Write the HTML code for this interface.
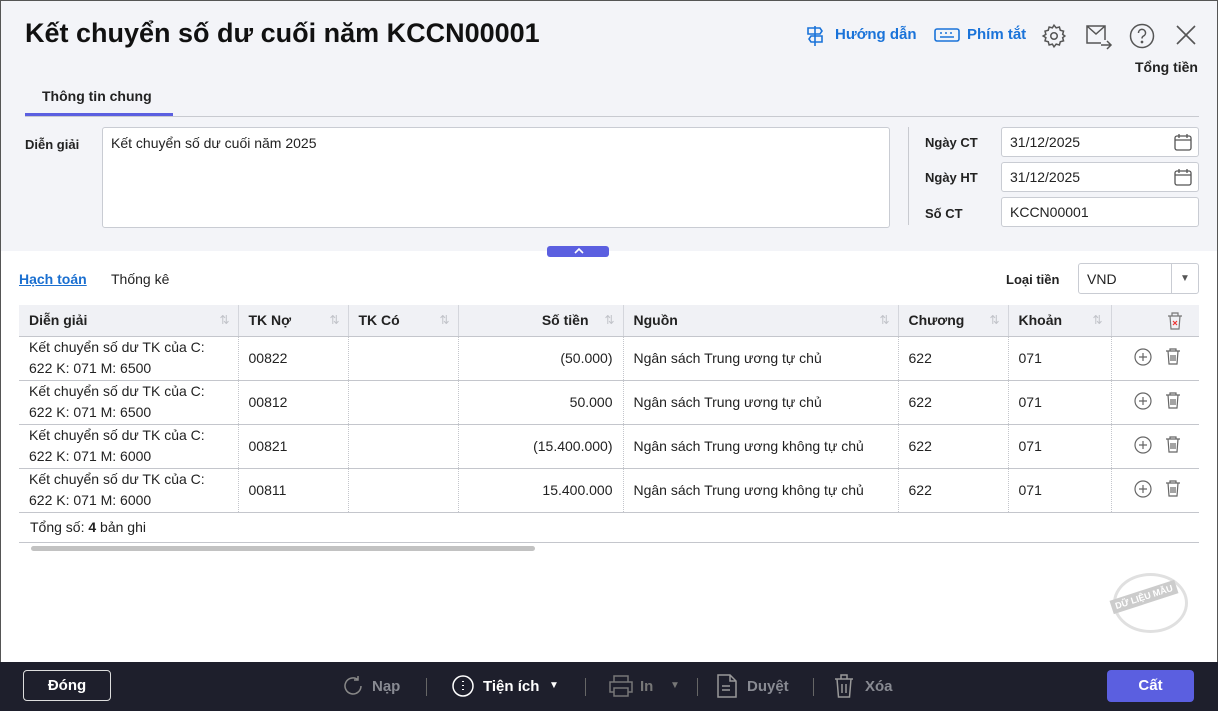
<!DOCTYPE html><html><head><meta charset="utf-8"><style>
*{box-sizing:border-box;margin:0;padding:0}
body{width:1218px;height:711px;overflow:hidden;font-family:"Liberation Sans",sans-serif;font-size:14px;color:#222;background:#fff;position:relative}
.abs{position:absolute}
.frame{position:absolute;left:0;top:0;width:1218px;height:711px;border:1px solid #555;border-bottom:none}
.top{position:absolute;left:1px;top:0;width:1216px;height:251px;background:#f3f4f8}
.box{position:absolute;background:#fff;border:1px solid #c9ccd3;border-radius:3px}
.lbl{position:absolute;font-weight:bold;font-size:13px}
table{position:absolute;left:19px;top:305px;width:1180px;border-collapse:collapse;table-layout:fixed}
th{height:31px;background:#f0f1f5;text-align:left;font-weight:bold;font-size:14px;padding:0 10px;border-right:1px solid #d4d6dc;border-bottom:1px solid #c4c6cc;position:relative}
th .s{position:absolute;right:8px;top:8px;color:#c2c4ca;font-size:12px;font-weight:normal}
td{height:44px;padding:0 10px;border-right:1px dotted #c4c6cc;border-bottom:1px solid #c4c6cc;line-height:21px;vertical-align:middle}
td:last-child,th:last-child{border-right:none}
.r{text-align:right}
.foot{position:absolute;left:0;top:662px;width:1218px;height:49px;background:#1e1f2c}
.fb{position:absolute;top:0;height:49px;line-height:49px;color:#888a92;font-weight:bold;font-size:15px}
</style></head><body>
<div class="top"></div>
<div class="frame"></div>
<div class="abs" style="left:25px;top:18px;font-size:27px;font-weight:bold;color:#111">Kết chuyển số dư cuối năm KCCN00001</div>
<svg class="abs" style="left:805px;top:25px" width="20" height="22" viewBox="0 0 20 22" fill="none" stroke="#1a73d9" stroke-width="1.6"><path d="M10 1v20M3 3h12l2 3-2 3H3zM17 11H6l-2 3 2 3h11z"/></svg>
<div class="abs" style="left:835px;top:26px;color:#1a73d9;font-weight:bold;font-size:15px">Hướng dẫn</div>
<svg class="abs" style="left:934px;top:28px" width="26" height="14" fill="none" stroke="#1a73d9" stroke-width="1.6"><rect x="1" y="1" width="24" height="12" rx="2"/><path d="M6 5h2M11 5h2M16 5h2M6 9h14" /></svg>
<div class="abs" style="left:967px;top:26px;color:#1a73d9;font-weight:bold;font-size:15px">Phím tắt</div>
<svg class="abs" style="left:1041px;top:23px" width="26" height="26" viewBox="0 0 24 24" fill="none" stroke="#555" stroke-width="1.4"><circle cx="12" cy="12" r="3"/><path d="M12 2l2 2.5 3-.8.8 3 3 .8-.8 3L22 12l-2 1.5.8 3-3 .8-.8 3-3-.8L12 22l-1.5-2.5-3 .8-.8-3-3-.8.8-3L2 12l2.5-1.5-.8-3 3-.8.8-3 3 .8z"/></svg>
<svg class="abs" style="left:1085px;top:24px" width="28" height="26" fill="none" stroke="#555" stroke-width="1.5"><path d="M20 16V2H2v17h14M2 2l9 8 9-8M16 21h10M22 17l4 4-4 4"/></svg>
<svg class="abs" style="left:1129px;top:23px" width="26" height="26" fill="none" stroke="#555" stroke-width="1.5"><circle cx="13" cy="13" r="11.5"/><path d="M9.5 10a3.5 3.5 0 1 1 5 3c-1.2.6-1.5 1.2-1.5 2.5"/><circle cx="13" cy="19" r=".6" fill="#555"/></svg>
<svg class="abs" style="left:1176px;top:25px" width="20" height="20" stroke="#555" stroke-width="1.6"><path d="M1 1l18 18M19 1L1 19"/></svg>
<div class="abs" style="left:1135px;top:59px;font-weight:bold;font-size:14px">Tổng tiền</div>
<div class="abs" style="left:42px;top:88px;font-weight:bold;font-size:14px">Thông tin chung</div>
<div class="abs" style="left:25px;top:113px;width:148px;height:3px;background:#5b5fe0"></div>
<div class="abs" style="left:25px;top:116px;width:1174px;height:1px;background:#c8cad0"></div>
<div class="lbl" style="left:25px;top:137px">Diễn giải</div>
<div class="box" style="left:102px;top:127px;width:788px;height:101px"></div>
<div class="abs" style="left:111px;top:135px">Kết chuyển số dư cuối năm 2025</div>
<div class="abs" style="left:908px;top:127px;width:1px;height:98px;background:#c8cad0"></div>
<div class="lbl" style="left:925px;top:135px">Ngày CT</div>
<div class="lbl" style="left:925px;top:170px">Ngày HT</div>
<div class="lbl" style="left:925px;top:206px">Số CT</div>
<div class="box" style="left:1001px;top:127px;width:198px;height:30px"></div>
<div class="box" style="left:1001px;top:162px;width:198px;height:30px"></div>
<div class="box" style="left:1001px;top:197px;width:198px;height:30px"></div>
<div class="abs" style="left:1010px;top:134px">31/12/2025</div>
<div class="abs" style="left:1010px;top:169px">31/12/2025</div>
<div class="abs" style="left:1010px;top:204px">KCCN00001</div>
<svg class="abs" style="left:1174px;top:133px" width="18" height="18" fill="none" stroke="#555" stroke-width="1.3"><rect x="1" y="3" width="16" height="14" rx="2"/><path d="M1 7h16M5 1v4M13 1v4"/></svg>
<svg class="abs" style="left:1174px;top:168px" width="18" height="18" fill="none" stroke="#555" stroke-width="1.3"><rect x="1" y="3" width="16" height="14" rx="2"/><path d="M1 7h16M5 1v4M13 1v4"/></svg>
<div class="abs" style="left:547px;top:246px;width:62px;height:11px;background:#5b5fe0;border-radius:3px"></div>
<svg class="abs" style="left:573px;top:247px" width="12" height="8" stroke="#fff" stroke-width="1.6" fill="none"><path d="M2 6l4-4 4 4"/></svg>
<div class="abs" style="left:19px;top:271px;color:#1a6fd0;text-decoration:underline;font-weight:bold;font-size:14px">Hạch toán</div>
<div class="abs" style="left:111px;top:271px">Thống kê</div>
<div class="lbl" style="left:1006px;top:272px">Loại tiền</div>
<div class="box" style="left:1078px;top:263px;width:121px;height:31px"></div>
<div class="abs" style="left:1087px;top:271px">VND</div>
<div class="abs" style="left:1171px;top:264px;width:1px;height:29px;background:#c9ccd3"></div>
<div class="abs" style="left:1180px;top:273px;font-size:10px;color:#555">▼</div>
<table>
<colgroup><col style="width:219px"><col style="width:110px"><col style="width:110px"><col style="width:165px"><col style="width:275px"><col style="width:110px"><col style="width:103px"><col style="width:88px"></colgroup>
<tr><th>Diễn giải<span class="s">⇅</span></th><th>TK Nợ<span class="s">⇅</span></th><th>TK Có<span class="s">⇅</span></th><th class="r" style="padding-right:34px">Số tiền<span class="s">⇅</span></th><th>Nguồn<span class="s">⇅</span></th><th>Chương<span class="s">⇅</span></th><th>Khoản<span class="s">⇅</span></th><th><svg style="position:absolute;left:55px;top:7px" width="16" height="18" fill="none" stroke="#777" stroke-width="1.2"><path d="M1 4h14M5 4V1h6v3M3 4l1 13h8l1-13"/><path d="M6 9l4 4M10 9l-4 4" stroke="#e33"/></svg></th></tr>
<tr><td>Kết chuyển số dư TK của C: 622 K: 071 M: 6500</td><td>00822</td><td></td><td class="r">(50.000)</td><td>Ngân sách Trung ương tự chủ</td><td>622</td><td>071</td><td></td></tr>
<tr><td>Kết chuyển số dư TK của C: 622 K: 071 M: 6500</td><td>00812</td><td></td><td class="r">50.000</td><td>Ngân sách Trung ương tự chủ</td><td>622</td><td>071</td><td></td></tr>
<tr><td>Kết chuyển số dư TK của C: 622 K: 071 M: 6000</td><td>00821</td><td></td><td class="r">(15.400.000)</td><td>Ngân sách Trung ương không tự chủ</td><td>622</td><td>071</td><td></td></tr>
<tr><td>Kết chuyển số dư TK của C: 622 K: 071 M: 6000</td><td>00811</td><td></td><td class="r">15.400.000</td><td>Ngân sách Trung ương không tự chủ</td><td>622</td><td>071</td><td></td></tr>
</table>
<svg class="abs" style="left:1130px;top:345px" width="60" height="160" fill="none" stroke="#666" stroke-width="1.2">
<g><circle cx="13" cy="12" r="8"/><path d="M13 8v8M9 12h8"/><path d="M36 6h14M40 6V4h6v2M38 6l1 13h8l1-13M41 10v6M43 10v6M45 10v6"/></g>
<g transform="translate(0,44)"><circle cx="13" cy="12" r="8"/><path d="M13 8v8M9 12h8"/><path d="M36 6h14M40 6V4h6v2M38 6l1 13h8l1-13M41 10v6M43 10v6M45 10v6"/></g>
<g transform="translate(0,88)"><circle cx="13" cy="12" r="8"/><path d="M13 8v8M9 12h8"/><path d="M36 6h14M40 6V4h6v2M38 6l1 13h8l1-13M41 10v6M43 10v6M45 10v6"/></g>
<g transform="translate(0,132)"><circle cx="13" cy="12" r="8"/><path d="M13 8v8M9 12h8"/><path d="M36 6h14M40 6V4h6v2M38 6l1 13h8l1-13M41 10v6M43 10v6M45 10v6"/></g>
</svg>
<div class="abs" style="left:30px;top:519px">Tổng số: <b>4</b> bản ghi</div>
<div class="abs" style="left:19px;top:542px;width:1180px;height:1px;background:#c4c6cc"></div>
<div class="abs" style="left:31px;top:546px;width:504px;height:5px;background:#c2c2c2;border-radius:3px"></div>
<div class="abs" style="left:1113px;top:573px;width:75px;height:60px;border:3px solid #ddd;border-radius:50%;opacity:.9"></div>
<div class="abs" style="left:1110px;top:590px;background:#ccc;color:#fff;font-size:9px;font-weight:bold;padding:2px 4px;transform:rotate(-18deg)">DỮ LIỆU MẪU</div>
<div class="foot">
<div class="abs" style="left:23px;top:8px;width:88px;height:31px;border:1px solid #ddd;border-radius:4px;color:#fff;font-weight:bold;text-align:center;line-height:29px;font-size:15px">Đóng</div>
<svg class="abs" style="left:342px;top:13px" width="22" height="22" fill="none" stroke="#888" stroke-width="1.5"><path d="M19 11a8 8 0 1 1-3-6.3M16 1v4h-4"/></svg>
<div class="fb" style="left:372px">Nạp</div>
<div class="abs" style="left:426px;top:16px;width:1px;height:18px;background:#666"></div>
<svg class="abs" style="left:452px;top:13px" width="22" height="22" fill="none" stroke="#fff" stroke-width="1.5"><circle cx="11" cy="11" r="10"/><path d="M11 6v1M11 10v1M11 14v1" stroke-width="2"/></svg>
<div class="fb" style="left:483px;color:#fff">Tiện ích</div>
<div class="abs" style="left:549px;top:18px;color:#fff;font-size:10px">▼</div>
<div class="abs" style="left:585px;top:16px;width:1px;height:18px;background:#666"></div>
<svg class="abs" style="left:609px;top:13px" width="24" height="22" fill="none" stroke="#777" stroke-width="1.5"><path d="M5 7V1h14v6M5 17H1V7h22v10h-4M5 13h14v8H5z"/></svg>
<div class="fb" style="left:640px;color:#777">In</div>
<div class="abs" style="left:670px;top:18px;color:#777;font-size:10px">▼</div>
<div class="abs" style="left:697px;top:16px;width:1px;height:18px;background:#666"></div>
<svg class="abs" style="left:717px;top:12px" width="20" height="24" fill="none" stroke="#999" stroke-width="1.5"><path d="M1 1h12l6 6v16H1zM13 1v6h6M5 12h8M5 16h8"/></svg>
<div class="fb" style="left:747px">Duyệt</div>
<div class="abs" style="left:813px;top:16px;width:1px;height:18px;background:#666"></div>
<svg class="abs" style="left:834px;top:12px" width="20" height="24" fill="none" stroke="#999" stroke-width="1.5"><path d="M1 5h18M7 5V1h6v4M3 5l1.5 18h11L17 5M8 10v9M12 10v9"/></svg>
<div class="fb" style="left:865px">Xóa</div>
<div class="abs" style="left:1107px;top:8px;width:87px;height:32px;background:#5b5fe0;border-radius:4px;color:#fff;font-weight:bold;text-align:center;line-height:32px;font-size:15px">Cất</div>
</div>
</body></html>
